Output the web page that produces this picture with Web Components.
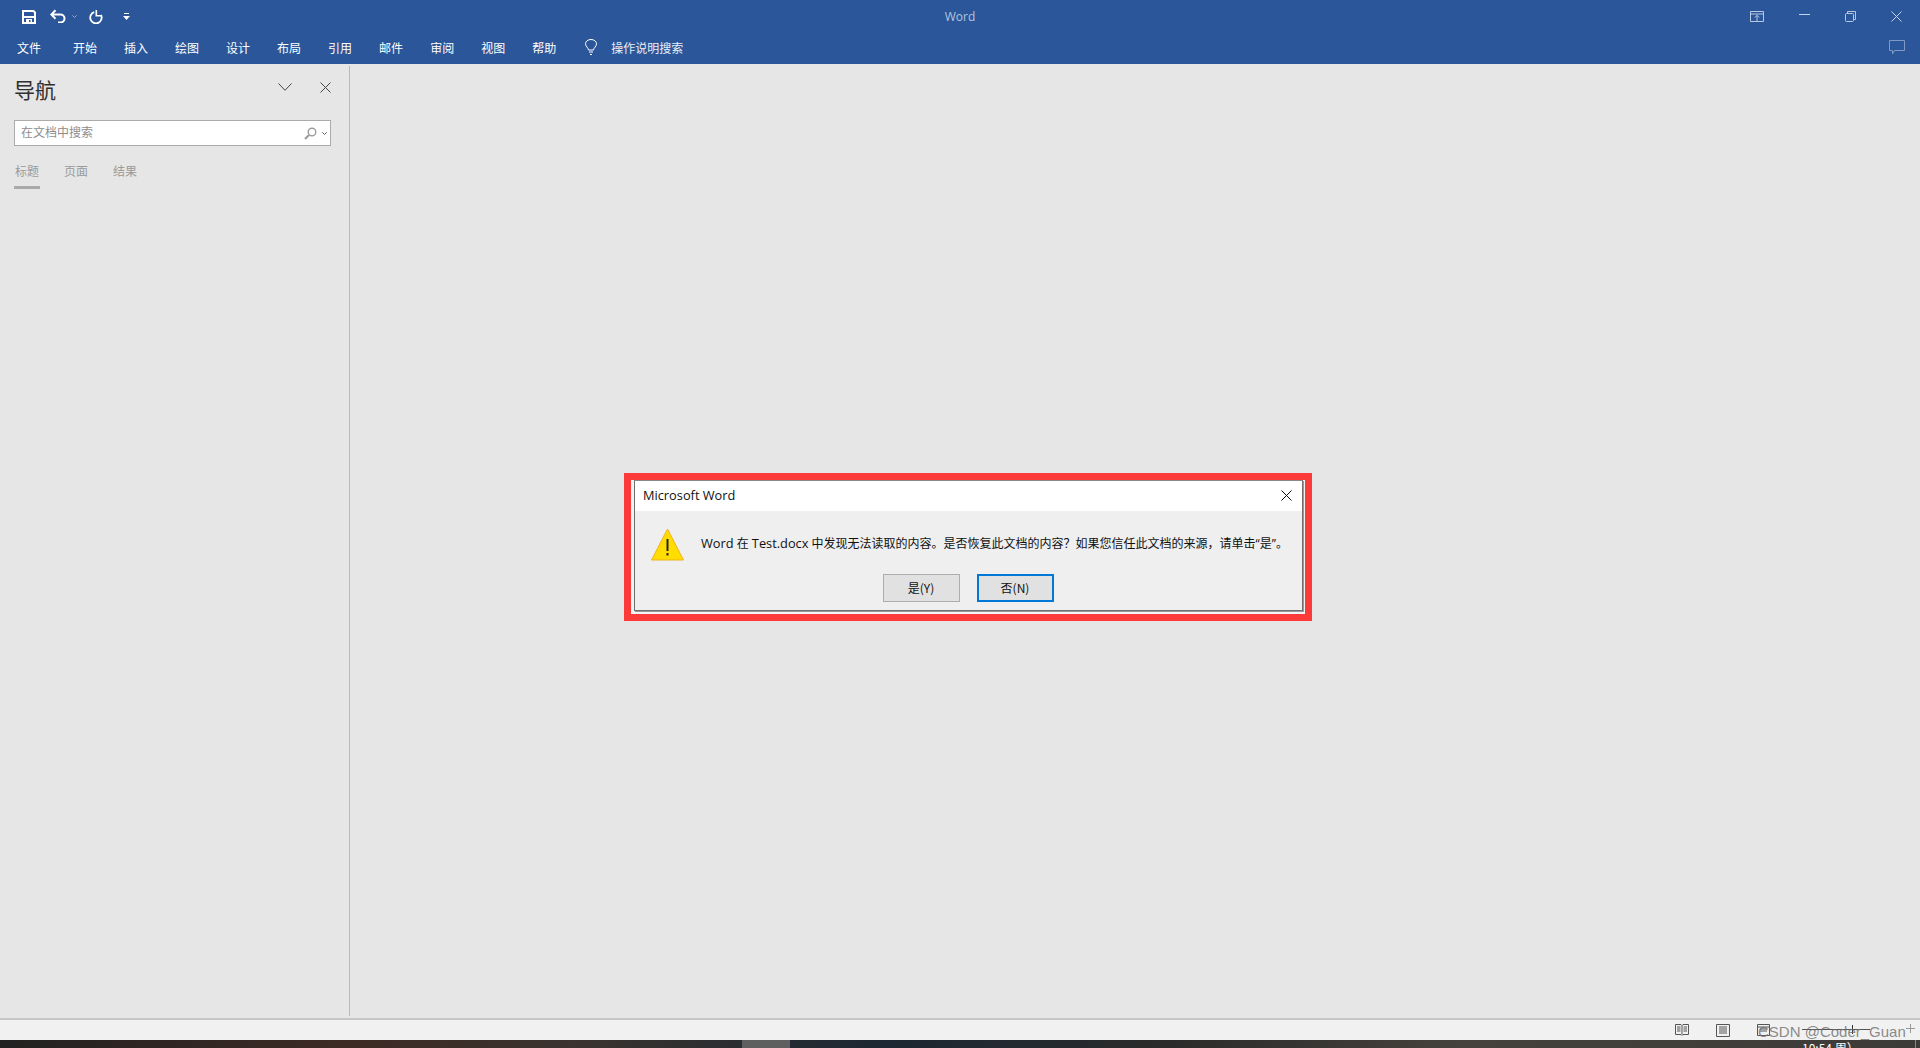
<!DOCTYPE html>
<html lang="zh">
<head>
<meta charset="utf-8">
<title>Word</title>
<style>
  html, body { margin: 0; height: 100%; overflow: hidden; }
  body {
    font-family: "Noto Sans CJK SC", sans-serif;
    font-size: 12px;
    display: flex;
    flex-direction: column;
    height: 1048px;
    background: #e6e6e6;
  }
</style>
</head>
<body>
<word-titlebar></word-titlebar>
<word-menu></word-menu>
<word-workspace>
  <nav-pane></nav-pane>
  <alert-dialog slot="over" heading="Microsoft Word"><b>Word</b> 在 <b>Test.docx</b> 中发现无法读取的内容。是否恢复此文档的内容？如果您信任此文档的来源，请单击“是”。</alert-dialog>
</word-workspace>
<word-status></word-status>
<task-bar></task-bar>

<script>
const define = (name, html) => {
  customElements.define(name, class extends HTMLElement {
    constructor() {
      super();
      this.attachShadow({mode: 'open'});
      this.shadowRoot.innerHTML = html;
    }
  });
};

define('word-titlebar', `
  <style>
    :host { display: flex; align-items: center; height: 32px; background: #2b579a; position: relative; flex: none; }
    svg { display: block; flex: none; }
    .quick { display: flex; align-items: center; padding-left: 22px; width: 588px; }
    .title { flex: 1; text-align: center; color: #b3c5de; font: 12px "Open Sans", sans-serif; margin-top: 1px; }
    .win { display: flex; align-items: center; justify-content: flex-end; width: 610px; padding-right: 18px; box-sizing: border-box; }
  </style>
  <div class="quick">
    <svg width="14" height="14" viewBox="0 0 14 14" style="margin-top:2px"><path d="M1 1h10.500L13 2.500V13H1z" fill="none" stroke="#fff" stroke-width="2"/><rect x="1" y="6" width="12" height="2" fill="#fff"/><rect x="4" y="9" width="6" height="3" fill="#fff"/><rect x="7" y="10" width="1.500" height="2" fill="#2b579a"/></svg>
    <svg width="17" height="14" viewBox="0 0 17 14" style="margin-left:14px"><path d="M1.500 5.500h9a4 4 0 0 1 0 8H8M5.500 1.200 1.300 5.500l4.200 4.200" fill="none" stroke="#fff" stroke-width="2"/></svg>
    <svg width="5" height="3" viewBox="0 0 5 3" style="margin:1px 0 0 5px"><path d="M.3.300l2.200 2.200L4.700.300" fill="none" stroke="#8fa8cc"/></svg>
    <svg width="14" height="14" viewBox="0 0 14 14" style="margin-left:12px;margin-top:1px"><path d="M5.200 2.200A5.700 5.700 0 1 0 12 5" fill="none" stroke="#fff" stroke-width="1.800"/><path d="M7.300 0v6.500M6.500 5.700h5.900" fill="none" stroke="#fff" stroke-width="1.600"/></svg>
    <svg width="7" height="7" viewBox="0 0 7 7" style="margin-left:20px;margin-top:1px"><rect x="1" y="0" width="5" height="1" fill="#fff"/><path d="M0 3h7L3.500 7z" fill="#fff"/></svg>
  </div>
  <div class="title">Word</div>
  <div class="win">
    <svg width="14" height="11" viewBox="0 0 14 11"><path d="M.5.500h13v10H.5zM.5 3h13M7 10.500V4.500M4.800 6.500 7 4.300l2.200 2.200" fill="none" stroke="#b8c8e0"/></svg>
    <svg width="11" height="1" viewBox="0 0 11 1" style="margin-left:35px;margin-top:-3px"><rect width="11" height="1" fill="#c6d3e6"/></svg>
    <svg width="11" height="11" viewBox="0 0 11 11" style="margin-left:35px"><rect x=".5" y="2.500" width="8" height="8" rx="1" fill="none" stroke="#b8c8e0"/><path d="M2.500 2.500V.5h8v8H8.500" fill="none" stroke="#b8c8e0"/></svg>
    <svg width="11" height="11" viewBox="0 0 11 11" style="margin-left:35px"><path d="M.5.500l10 10M10.500.500l-10 10" fill="none" stroke="#c6d3e6"/></svg>
  </div>
`);

define('word-menu', `
  <style>
    :host { display: flex; align-items: center; height: 32px; box-sizing: border-box; padding: 0 0 2px 17px; background: #2b579a; color: #fff; font-size: 12px; flex: none; position: relative; }
    span { margin-right: 27px; white-space: nowrap; }
    span:first-of-type { margin-right: 32px; }
    .search { display: flex; align-items: center; gap: 14px; margin-left: 2px; color: #e8eef6; }
    .comment { margin-left: auto; margin-right: 15px; display: block; margin-top: 1px; }
  </style>
  <span>文件</span><span>开始</span><span>插入</span><span>绘图</span><span>设计</span><span>布局</span><span>引用</span><span>邮件</span><span>审阅</span><span>视图</span><span>帮助</span>
  <div class="search">
    <svg width="12" height="16" viewBox="0 0 12 16"><path d="M3.500 11c0-2-3-3.500-3-6.300a5.500 4.200 0 0 1 11 0c0 2.800-3 4.300-3 6.300zM4 13h4M5 15.500h2" fill="none" stroke="#fff"/></svg>
    操作说明搜索
  </div>
  <svg class="comment" width="16" height="15" viewBox="0 0 16 15"><path d="M.5.500h15v10H5.500L3.500 14v-3.500h-3z" fill="none" stroke="#7f9bc4"/></svg>
`);

define('word-workspace', `
  <style>
    :host { display: flex; flex: 1; min-height: 0; position: relative; background: #e6e6e6; }
    .doc { flex: 1; }
  </style>
  <slot></slot>
  <div class="doc"></div>
  <slot name="over"></slot>
`);

define('nav-pane', `
  <style>
    :host { display: block; width: 349px; margin-top: 2px; margin-bottom: 2px; border-right: 1px solid #b9b9b9; box-sizing: content-box; color: #444; }
    .head { display: flex; align-items: center; height: 34px; padding: 7px 0 0 14px; }
    h1 { margin: -2px 0 0; font-size: 21px; font-weight: 400; line-height: 34px; color: #2f2f2f; flex: 1; }
    .head svg { display: block; margin-top: -6px; }
    .box { display: flex; align-items: center; margin: 13px 18px 0 14px; height: 26px; box-sizing: border-box; border: 1px solid #ababab; background: #fff; color: #8d8d8d; padding-left: 6px; font-size: 12px; }
    .box span { flex: 1; margin-top: -3px; }
    .tabs { display: flex; margin: 15px 0 0 14px; color: #9a9a9a; font-size: 12px; }
    .tab { width: 26px; text-align: center; padding-bottom: 5px; margin-right: 23px; line-height: 20px; border-bottom: 3px solid transparent; }
    .tab.on { border-color: #aaa; }
  </style>
  <div class="head">
    <h1>导航</h1>
    <svg width="14" height="8" viewBox="0 0 14 8" style="margin-right:28px"><path d="M.5.500 7 7.300 13.500.500" fill="none" stroke="#444"/></svg>
    <svg width="11" height="11" viewBox="0 0 11 11" style="margin-right:18px"><path d="M.5.500l10 10M10.500.500l-10 10" fill="none" stroke="#444"/></svg>
  </div>
  <div class="box">
    <span>在文档中搜索</span>
    <svg width="13" height="13" viewBox="0 0 13 13"><circle cx="8" cy="5" r="3.800" fill="none" stroke="#9c9c9c" stroke-width="1.400"/><path d="M5 8 1 12" stroke="#9c9c9c" stroke-width="2.200"/></svg>
    <svg width="5" height="3" viewBox="0 0 5 3" style="margin:1px 3px 0 5px"><path d="M.3.300l2.200 2.200L4.700.300" fill="none" stroke="#666"/></svg>
  </div>
  <div class="tabs">
    <div class="tab on">标题</div><div class="tab">页面</div><div class="tab">结果</div>
  </div>
`);

define('word-status', `
  <style>
    :host { display: flex; align-items: center; justify-content: flex-end; height: 22px; box-sizing: border-box; border-top: 2px solid #c6c6c6; background: #f1f1f1; flex: none; position: relative; }
    .views { display: flex; align-items: center; gap: 27px; margin-right: 32px; }
    svg { display: block; }
    .zoom { position: relative; width: 118px; height: 14px; }
    .line { position: absolute; left: 0; top: 6px; width: 68px; height: 1px; background: #555; }
    .thumb { position: absolute; left: 50px; top: 2px; width: 1px; height: 9px; background: #333; }
    .plus { position: absolute; left: 104px; top: 1px; }
    .mark { position: absolute; left: 1758px; top: 4px; font: 15px/16px "Liberation Sans", sans-serif; color: rgba(110,110,110,.8); white-space: nowrap; }
  </style>
  <div class="views">
    <svg width="14" height="12" viewBox="0 0 14 12"><path d="M.5.500h5.500L7 1.500 8 .500h5.500v10H8l-1 1-1-1H.5zM7 1.500v9M2 3h3.500M2 5h3.500M2 7h3.500M8.500 3H12M8.500 5H12M8.500 7H12" fill="none" stroke="#555"/></svg>
    <svg width="14" height="13" viewBox="0 0 14 13"><path d="M.5.500h13v12H.5zM3 3h8M3 5h8M3 7h8M3 9h8" fill="none" stroke="#555"/></svg>
    <svg width="13" height="12" viewBox="0 0 13 12"><path d="M.5.500h12v11H.5zM.5 3h12M3 5h7M3 7h7" fill="none" stroke="#555"/></svg>
  </div>
  <div class="zoom">
    <div class="line"></div><div class="thumb"></div>
    <svg class="plus" width="9" height="9" viewBox="0 0 9 9"><path d="M4.500 0v9M0 4.500h9" stroke="#999"/></svg>
  </div>
  <div class="mark">CSDN @Coder_Guan</div>
`);

define('task-bar', `
  <style>
    :host { display: block; height: 8px; flex: none; position: relative; overflow: hidden;
      background: linear-gradient(90deg, #222 0%, #3d2a24 18%, #3a332f 30%, #1c2733 46%, #2a2a2a 60%, #45413d 76%, #3d3b38 100%); }
    .active { position: absolute; left: 742px; top: 0; width: 48px; height: 8px; background: #5f5f5f; }
    .clock { position: absolute; left: 1802px; top: 0; color: #fff; font-size: 12px; line-height: 16px; white-space: nowrap; }
    .edge { position: absolute; left: 1915px; top: 0; width: 1px; height: 8px; background: #888; }
  </style>
  <div class="active"></div>
  <div class="clock">10:54 周）</div>
  <div class="edge"></div>
`);

customElements.define('dialog-button', class extends HTMLElement {
  constructor() {
    super();
    this.attachShadow({mode: 'open'});
    this.shadowRoot.innerHTML = `
      <style>
        :host { display: flex; align-items: center; justify-content: center; width: 77px; height: 28px; padding-bottom: 2px; box-sizing: border-box; border: 1px solid #adadad; background: #e1e1e1; color: #111; font-size: 12px; }
        :host([focused]) { border: 2px solid #0078d7; }
      </style>
      <slot></slot>`;
  }
});

customElements.define('alert-dialog', class extends HTMLElement {
  constructor() {
    super();
    this.attachShadow({mode: 'open'});
    this.shadowRoot.innerHTML = `
      <style>
        :host { display: block; position: absolute; left: 624px; top: 409px; width: 688px; height: 148px; box-sizing: border-box; border: 7px solid #fc3a3a; background: #f4f4f4; }
        .win { margin: 0 0 0 3px; height: 131px; width: 669px; box-sizing: border-box; border: 1px solid #6e6e6e; border-top-color: #888; background: #efefef; display: flex; flex-direction: column; box-shadow: 1px 1px 0 #999; }
        .top { display: flex; align-items: center; justify-content: space-between; height: 30px; padding: 0 10px 2px 8px; box-sizing: border-box; background: #fff; font: 12.800px "Open Sans", sans-serif; color: #111; flex: none; }
        .body { display: flex; align-items: center; padding: 17px 0 0 16px; height: 32px; }
        .msg { margin-left: 17px; color: #111; white-space: nowrap; font-size: 12px; font-family: "Open Sans", "Noto Sans CJK SC", sans-serif; margin-top: -2px; }
        ::slotted(b) { font-weight: 400; font-size: 12.800px; }
        .btns { display: flex; justify-content: center; gap: 17px; margin-top: 14px; margin-left: -1px; }
        svg { display: block; flex: none; }
      </style>
      <div class="win">
        <div class="top">
          <span id="h"></span>
          <svg width="11" height="11" viewBox="0 0 11 11"><path d="M.5.500l10 10M10.500.500l-10 10" fill="none" stroke="#111"/></svg>
        </div>
        <div class="body">
          <svg width="33" height="33" viewBox="0 0 33 33"><path d="M16.500 1 32.500 32H.5z" fill="#ffdd00" stroke="#f2b21c"/><rect x="15.500" y="11" width="2" height="12" fill="#222"/><rect x="15.500" y="25" width="2" height="2.500" fill="#222"/></svg>
          <div class="msg"><slot></slot></div>
        </div>
        <div class="btns">
          <dialog-button>是(Y)</dialog-button>
          <dialog-button focused>否(N)</dialog-button>
        </div>
      </div>`;
  }
  connectedCallback() {
    this.shadowRoot.getElementById('h').textContent = this.getAttribute('heading');
  }
});
</script>
</body>
</html>
